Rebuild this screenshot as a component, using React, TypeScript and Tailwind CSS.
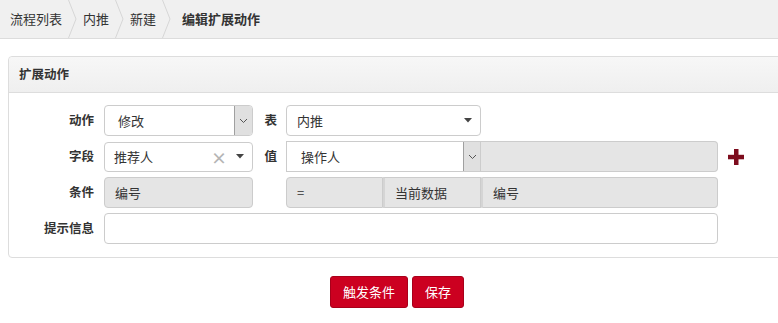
import React from "react";

const font = { fontFamily: '"Noto Sans CJK SC", "Microsoft YaHei", sans-serif' };

function Chevron() {
  return (
    <svg width="9" height="38" viewBox="0 0 9 38" className="mx-[6px] shrink-0">
      <polyline points="0.5,0 8,19 0.5,38" fill="none" stroke="#d6d6d6" strokeWidth="1" />
    </svg>
  );
}

function Caret() {
  return (
    <svg width="8" height="5" viewBox="0 0 8 5">
      <polygon points="0,0 8,0 4,4.5" fill="#444" />
    </svg>
  );
}

function SmallChevron() {
  return (
    <svg width="9" height="6" viewBox="0 0 9 6">
      <polyline points="1,1 4.5,4.5 8,1" fill="none" stroke="#555" strokeWidth="1" />
    </svg>
  );
}

function Label({ children, w }: { children: React.ReactNode; w: string }) {
  return (
    <div className={`${w} shrink-0 text-right font-bold text-[12.5px] text-[#333] pr-[10px]`}>{children}</div>
  );
}

export default function App() {
  return (
    <div style={font} className="w-[778px] h-[323px] bg-white text-[13px] text-[#333] overflow-hidden">
      {/* breadcrumb */}
      <div className="h-[39px] bg-[#f0f0f0] border-b border-[#dcdcdc] flex items-center pl-[10px]">
        <span>流程列表</span>
        <Chevron />
        <span>内推</span>
        <Chevron />
        <span>新建</span>
        <Chevron />
        <span className="font-bold pl-[5px]">编辑扩展动作</span>
      </div>

      {/* panel */}
      <div className="mt-[17px] ml-[8px] w-[790px] border border-[#dddddd] rounded-[4px]">
        <div className="h-[36px] bg-gradient-to-b from-[#f7f7f7] to-[#efefef] border-b border-[#dddddd] rounded-t-[4px] flex items-center pl-[10px] font-bold text-[12.5px]">
          扩展动作
        </div>
        <div className="pt-[12px] pb-[13px] flex flex-col gap-[5px]">
          {/* row 1 */}
          <div className="flex items-center h-[31px]">
            <Label w="w-[95px]">动作</Label>
            <div className="w-[149px] h-[31px] border border-[#cccccc] rounded-[4px] flex items-center bg-white overflow-hidden">
              <span className="flex-1 pl-[13px]">修改</span>
              <div className="w-[18px] h-full bg-[#e0e0e0] border-l border-[#a0a0a0] flex items-center justify-center">
                <SmallChevron />
              </div>
            </div>
            <div className="w-[33px] shrink-0 text-right font-bold text-[12.5px] pr-[9px]">表</div>
            <div className="w-[195px] h-[31px] border border-[#cccccc] rounded-[4px] flex items-center bg-white">
              <span className="flex-1 pl-[10px]">内推</span>
              <span className="pr-[8px] flex items-center"><Caret /></span>
            </div>
          </div>
          {/* row 2 */}
          <div className="flex items-center h-[31px]">
            <Label w="w-[95px]">字段</Label>
            <div className="w-[149px] h-[30px] border border-[#cccccc] rounded-[4px] flex items-center bg-white">
              <span className="flex-1 pl-[9px]">推荐人</span>
              <span className="text-[#b5b5b5] text-[16px] font-bold mr-[9px] leading-none">×</span>
              <span className="pr-[8px] flex items-center"><Caret /></span>
            </div>
            <div className="w-[33px] shrink-0 text-right font-bold text-[12.5px] pr-[9px]">值</div>
            <div className="flex h-[31px]">
              <div className="w-[195px] h-full border border-[#cccccc] flex items-center bg-white">
                <span className="flex-1 pl-[14px]">操作人</span>
                <div className="w-[17px] h-full bg-[#e0e0e0] border-l border-[#a0a0a0] flex items-center justify-center">
                  <SmallChevron />
                </div>
              </div>
              <div className="w-[237px] h-full bg-[#e5e5e5] border border-[#cccccc] border-l-0 rounded-r-[4px]" />
            </div>
            <svg width="16" height="16" viewBox="0 0 16 16" className="ml-[10px]">
              <rect x="6" y="0" width="4.5" height="16" fill="#7d0c1d" />
              <rect x="0" y="5.8" width="16" height="4.5" fill="#7d0c1d" />
            </svg>
          </div>
          {/* row 3 */}
          <div className="flex items-center h-[31px]">
            <Label w="w-[95px]">条件</Label>
            <div className="w-[149px] h-[31px] border border-[#cccccc] rounded-[4px] flex items-center bg-[#e5e5e5] pl-[10px]">
              编号
            </div>
            <div className="w-[33px] shrink-0" />
            <div className="flex h-[31px]">
              <div className="w-[97px] h-full border border-[#cccccc] rounded-l-[4px] bg-[#e5e5e5] flex items-center pl-[10px]">=</div>
              <div className="w-[98px] h-full border border-[#cccccc] border-l-[2px] border-l-[#d5d5d5] bg-[#e5e5e5] flex items-center pl-[10px]">当前数据</div>
              <div className="w-[237px] h-full border border-[#cccccc] border-l-[2px] border-l-[#d5d5d5] rounded-r-[4px] bg-[#e5e5e5] flex items-center pl-[10px]">编号</div>
            </div>
          </div>
          {/* row 4 */}
          <div className="flex items-center h-[31px]">
            <Label w="w-[95px]">提示信息</Label>
            <div className="w-[614px] h-[31px] border border-[#cccccc] rounded-[4px] bg-white" />
          </div>
        </div>
      </div>

      {/* buttons */}
      <div className="flex gap-[4px] pl-[330px] mt-[18px]">
        <button className="w-[78px] h-[32px] bg-[#cc0020] border border-[#a8001a] rounded-[3px] text-white text-[13px]">触发条件</button>
        <button className="w-[52px] h-[32px] bg-[#cc0020] border border-[#a8001a] rounded-[3px] text-white text-[13px]">保存</button>
      </div>
    </div>
  );
}
